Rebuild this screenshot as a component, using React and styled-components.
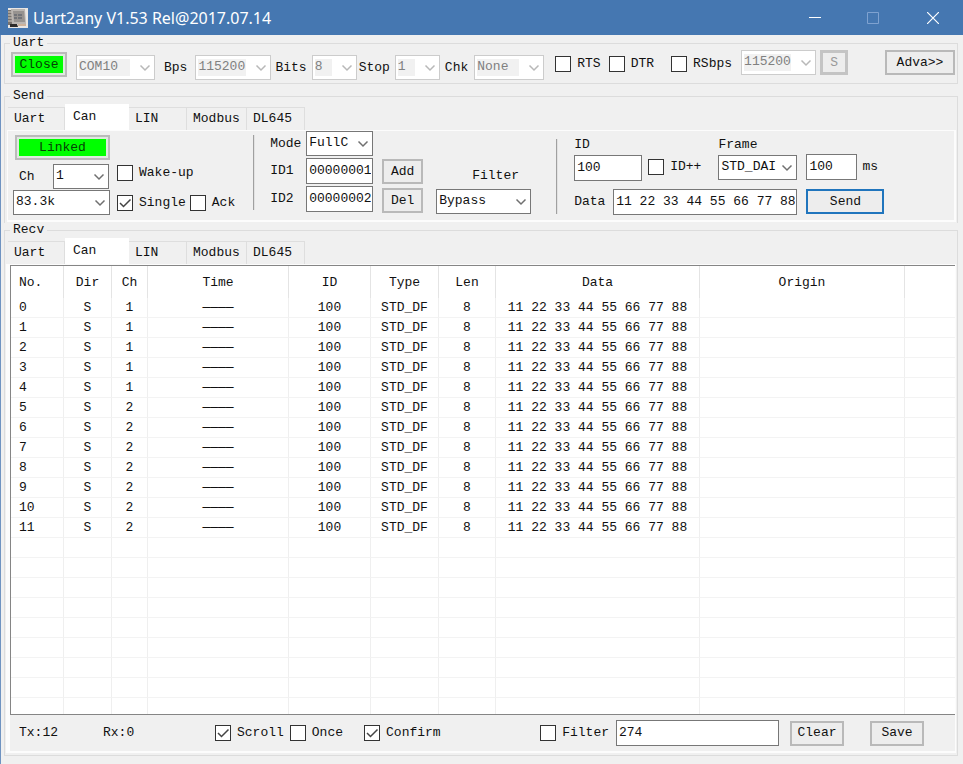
import * as React from "react"
import styled, { createGlobalStyle, css } from "styled-components"

const GlobalStyle = createGlobalStyle`
  *, *::before, *::after {
    box-sizing: border-box;
  }
  body {
    margin: 0;
    background: #f0f0f0;
  }
  body, button, input, select {
    font-family: "Liberation Mono", "DejaVu Sans Mono", monospace;
    font-size: 13px;
    line-height: 14px;
    color: #111;
  }
`

const Window = styled.div`
  display: flex;
  flex-direction: column;
  min-height: 100vh;
  border-left: 1px solid #6f93c1;
`

const TitleBar = styled.header`
  display: flex;
  align-items: center;
  height: 35px;
  margin-left: -1px;
  padding-left: 8px;
  background: #4577b1;
  color: #fff;
`

const Title = styled.h1`
  flex: 1;
  margin: 0 0 0 5px;
  font: 400 16px/20px "Noto Sans", "Open Sans", sans-serif;
`

const WindowButton = styled.button`
  display: flex;
  align-items: center;
  justify-content: center;
  width: ${({ width }) => width || 58}px;
  height: 35px;
  padding: 0;
  border: 0;
  background: transparent;
`

const Body = styled.main`
  display: flex;
  flex: 1;
  flex-direction: column;
  padding: 1px 5px 8px 3px;
`

const Group = styled.fieldset`
  min-width: 0;
  margin: 0 0 ${({ gap }) => gap || 0}px;
  padding: 0;
  border: 1px solid #dcdcdc;
  border-bottom-width: ${({ open }) => (open ? 0 : 1)}px;
`

const Legend = styled.legend`
  height: 14px;
  margin-left: 5px;
  padding: 0 3px;
`

const Row = styled.div`
  display: flex;
  align-items: ${({ align }) => align || "center"};
  gap: ${({ gap }) => gap || 0}px;
  margin-top: ${({ top }) => top || 0}px;
  margin-left: ${({ left }) => left || 0}px;
`

const Column = styled.div`
  display: flex;
  flex-direction: column;
  gap: ${({ gap }) => gap || 0}px;
  margin-top: ${({ top }) => top || 0}px;
  margin-left: ${({ left }) => left || 0}px;
`

const PortBar = styled.div`
  display: flex;
  align-items: flex-start;
  height: 33px;
  padding: 0 2px 0 6px;
`

const Caption = styled.label`
  display: block;
  flex: none;
  width: ${({ width }) => (width ? `${width}px` : "auto")};
  white-space: pre;
`

const Button = styled.button`
  flex: none;
  width: ${({ width }) => width}px;
  height: 25px;
  padding: 0;
  border: 2px solid #b9b9b9;
  background: #ededed;
  text-align: center;
  ${({ primary }) =>
    primary &&
    css`
      border-color: #2075bd;
    `}
  ${({ active }) =>
    active &&
    css`
      border-color: #bbb;
      background: #00ff00;
      box-shadow: inset 0 0 0 2px #dfeadf;
      color: #064006;
    `}
  &:disabled {
    border-width: 3px;
    border-color: #c4c4c4;
    color: #999;
  }
`

const TextInput = styled.input`
  flex: none;
  width: ${({ $width }) => $width}px;
  height: 26px;
  padding: 0 1px 2px 2px;
  border: 1px solid #777;
  border-radius: 0;
  background: #fff;
`

const SelectBox = styled.span`
  display: grid;
  flex: none;
  width: ${({ width }) => width}px;
  height: 25px;
  align-items: center;
  > * {
    grid-area: 1 / 1;
  }
  svg {
    justify-self: end;
    margin-right: 4px;
    pointer-events: none;
  }
`

const StyledSelect = styled.select`
  width: 100%;
  height: 25px;
  padding: 0 0 2px 2px;
  appearance: none;
  border: 1px solid #777;
  border-radius: 0;
  background: #fff;
  &:disabled {
    border-color: #ccc;
    background: linear-gradient(#f1f1f1, #f1f1f1) no-repeat 2px 3px /
      calc(100% - 26px) 17px #fff;
    color: #808080;
    opacity: 1;
  }
`

const CheckLabel = styled.label`
  display: grid;
  flex: none;
  grid-template-columns: 16px auto;
  column-gap: 6px;
  align-items: center;
  white-space: pre;
  svg {
    grid-area: 1 / 1;
    visibility: hidden;
    pointer-events: none;
  }
  input:checked + svg {
    visibility: visible;
  }
`

const Box = styled.input`
  grid-area: 1 / 1;
  width: 16px;
  height: 16px;
  margin: 0;
  appearance: none;
  border: 1px solid #333;
  background: #fff;
`

const TabList = styled.div`
  display: flex;
  align-items: flex-end;
  height: 26px;
  margin-top: 1px;
  padding-left: 3px;
`

const Tab = styled.button`
  width: ${({ width }) => width}px;
  height: 23px;
  padding: 0 0 0 6px;
  border: 1px solid #dedede;
  border-width: 1px 1px 0 0;
  background: #f0f0f0;
  text-align: left;
  &[aria-selected="true"] {
    height: 26px;
    padding: 0 0 2px 8px;
    border-color: #fff;
    background: #fff;
  }
`

const SendPanel = styled.div`
  display: flex;
  align-items: flex-start;
  height: 92px;
  margin: 0 1px 1px 2px;
  border: solid #fcfcfc;
  border-width: 1px 2px 2px 1px;
`

const Divider = styled.div`
  flex: none;
  width: 2px;
  height: 75px;
  margin: ${({ top }) => top}px 0 0 ${({ left }) => left}px;
  border-left: 1px solid #a0a0a0;
  border-right: 1px solid #e2e2e2;
`

const RecvPanel = styled.div`
  margin: 0 1px 2px;
  border: solid #fcfcfc;
  border-width: 1px 1px 2px 4px;
`

const TableFrame = styled.div`
  overflow: hidden;
  border: 1px solid #858585;
  border-right: 0;
  background: #fff;
`

const Table = styled.table`
  width: 100%;
  table-layout: fixed;
  border-collapse: separate;
  border-spacing: 0;
  th,
  td {
    padding: 0;
    border-right: 1px solid #efefef;
    text-align: center;
    white-space: pre;
  }
  th {
    height: 32px;
    padding-top: 2px;
    border-color: #e4e4e4;
    font-weight: 400;
  }
  td {
    height: 20px;
    border-bottom: 1px solid #f3f3f3;
  }
  tbody tr:last-child td {
    height: 16px;
    border-bottom: 0;
  }
  th:first-child,
  td:first-child {
    padding-left: 8px;
    text-align: left;
  }
  th:last-child,
  td:last-child {
    border-right: 0;
  }
`

const Footer = styled.footer`
  display: flex;
  align-items: center;
  height: 36px;
  padding-left: 9px;
`

const Push = styled.div`
  display: flex;
  align-items: center;
  margin-left: auto;
  padding-right: ${({ right }) => right || 0}px;
`

const AppIcon = () => (
  <svg width="20" height="20" viewBox="0 0 20 20" aria-hidden="true">
    <rect width="20" height="20" fill="#e9e6e3" />
    <path d="M0 2h4v15H0z" fill="#77726f" />
    <path d="M0 4h4M0 7h4M0 10h4M0 13h4" stroke="#d5cdc5" />
    <path d="M3 1h14l1 15H4z" fill="#bab5b1" />
    <path d="M5 3h11l1 11H6z" fill="#96928f" />
    <path d="M6 7h3m1 0h4M6 10h3m1 0h4" stroke="#4c5563" />
    <path d="M2 16h7l1 3H2z" fill="#2d2b2b" />
    <path d="M10 17h8" stroke="#cdb29b" strokeWidth="2" />
  </svg>
)

const Chevron = ({ color }) => (
  <svg width="12" height="8" viewBox="0 0 12 8" fill="none">
    <path d="M1.5 1.5 6 6l4.500-4.500" stroke={color} strokeWidth="1.500" />
  </svg>
)

const Select = ({ label, value, width, ...props }) => (
  <SelectBox width={width}>
    <StyledSelect aria-label={label} {...props}>
      <option>{value}</option>
    </StyledSelect>
    <Chevron color={props.disabled ? "#b8b8b8" : "#707070"} />
  </SelectBox>
)

const Check = ({ children, checked }) => (
  <CheckLabel>
    <Box type="checkbox" defaultChecked={checked} />
    <svg width="16" height="16" viewBox="0 0 16 16" fill="none">
      <path d="M3 8l3.500 3.500L13.500 4.500" stroke="#444" strokeWidth="1.500" />
    </svg>
    <span>{children}</span>
  </CheckLabel>
)

const tabs = [
  { name: "Uart", width: 57 },
  { name: "Can", width: 64 },
  { name: "LIN", width: 58 },
  { name: "Modbus", width: 60 },
  { name: "DL645", width: 58 }
]

const Tabs = ({ label }) => {
  const [selected, setSelected] = React.useState("Can")
  return (
    <TabList role="tablist" aria-label={label}>
      {tabs.map(tab => (
        <Tab
          key={tab.name}
          role="tab"
          width={tab.width}
          aria-selected={selected === tab.name}
          onClick={() => setSelected(tab.name)}
        >
          {tab.name}
        </Tab>
      ))}
    </TabList>
  )
}

const columns = [
  { name: "No.", width: 53 },
  { name: "Dir", width: 48 },
  { name: "Ch", width: 36 },
  { name: "Time", width: 141 },
  { name: "ID", width: 82 },
  { name: "Type", width: 68 },
  { name: "Len", width: 57 },
  { name: "Data", width: 204 },
  { name: "Origin", width: 205 },
  { name: "" }
]

const frames = Array.from({ length: 12 }, (_, no) => ({
  no,
  ch: no < 5 ? 1 : 2
}))

const emptyRows = Array.from({ length: 9 }, (_, i) => i)

const FrameTable = () => (
  <Table>
    <colgroup>
      {columns.map(({ name, width }) => (
        <col key={name} width={width} />
      ))}
    </colgroup>
    <thead>
      <tr>
        {columns.map(({ name }) => (
          <th key={name}>{name}</th>
        ))}
      </tr>
    </thead>
    <tbody>
      {frames.map(({ no, ch }) => (
        <tr key={no}>
          <td>{no}</td>
          <td>S</td>
          <td>{ch}</td>
          <td>————</td>
          <td>100</td>
          <td>STD_DF</td>
          <td>8</td>
          <td>11 22 33 44 55 66 77 88</td>
          <td />
          <td />
        </tr>
      ))}
      {emptyRows.map(i => (
        <tr key={`empty${i}`}>
          {columns.map(({ name }) => (
            <td key={name} />
          ))}
        </tr>
      ))}
    </tbody>
  </Table>
)

const App = () => (
  <Window>
    <GlobalStyle />
    <TitleBar>
      <AppIcon />
      <Title>Uart2any V1.53 Rel@2017.07.14</Title>
      <WindowButton aria-label="Minimize">
        <svg width="12" height="12" stroke="#fff">
          <path d="M0 5.500h12" />
        </svg>
      </WindowButton>
      <WindowButton aria-label="Maximize" disabled>
        <svg width="12" height="12" fill="none" stroke="#7fa2d0">
          <path d="M.5 .5h11v11H.5z" />
        </svg>
      </WindowButton>
      <WindowButton aria-label="Close window" width={61}>
        <svg width="12" height="12" stroke="#fff" strokeWidth="1.200">
          <path d="M0 0l12 12M12 0L0 12" />
        </svg>
      </WindowButton>
    </TitleBar>
    <Body>
      <Group gap={5}>
        <Legend>Uart</Legend>
        <PortBar>
          <Row top={2}>
            <Button active width={56}>
              Close
            </Button>
          </Row>
          <Row top={5} left={9}>
            <Select label="Port" value="COM10" width={79} disabled />
            <Row left={9} gap={8}>
              <Caption>Bps</Caption>
              <Select label="Bps" value="115200" width={76} disabled />
            </Row>
            <Row left={4} gap={5}>
              <Caption>Bits</Caption>
              <Select label="Bits" value="8" width={45} disabled />
            </Row>
            <Row left={2} gap={5}>
              <Caption>Stop</Caption>
              <Select label="Stop" value="1" width={45} disabled />
            </Row>
            <Row left={5} gap={6}>
              <Caption>Chk</Caption>
              <Select label="Chk" value="None" width={70} disabled />
            </Row>
          </Row>
          <Row top={6} left={11} gap={8}>
            <Check>RTS</Check>
            <Check>DTR</Check>
            <Row left={9}>
              <Check>RSbps</Check>
            </Row>
          </Row>
          <Row left={9} gap={4}>
            <Select label="RSbps rate" value="115200" width={75} disabled />
            <Button width={28} disabled>
              S
            </Button>
          </Row>
          <Push>
            <Button width={70}>Adva&gt;&gt;</Button>
          </Push>
        </PortBar>
      </Group>

      <Group open>
        <Legend>Send</Legend>
        <Tabs label="Send protocol" />
        <SendPanel>
          <Column top={4} left={5}>
            <Row left={2}>
              <Button active width={95}>
                Linked
              </Button>
            </Row>
            <Row top={4} gap={8} align="flex-start">
              <Row left={6}>
                <Caption width={34}>Ch</Caption>
                <Select label="Ch" value="1" width={56} />
              </Row>
              <Row top={1}>
                <Check>Wake-up</Check>
              </Row>
            </Row>
            <Row top={1} gap={7}>
              <Select label="Bit rate" value="83.3k" width={97} />
              <Row gap={4}>
                <Check checked>Single</Check>
                <Check>Ack</Check>
              </Row>
            </Row>
          </Column>
          <Divider top={4} left={18} />
          <Column left={15} gap={2}>
            <Row>
              <Caption width={36}>Mode</Caption>
              <Select label="Mode" value="FullC" width={67} />
            </Row>
            <Row>
              <Caption width={36} htmlFor="id1">
                ID1
              </Caption>
              <TextInput id="id1" $width={67} defaultValue="00000001" />
            </Row>
            <Row>
              <Caption width={36} htmlFor="id2">
                ID2
              </Caption>
              <TextInput id="id2" $width={67} defaultValue="00000002" />
            </Row>
          </Column>
          <Column left={9} top={28} gap={4}>
            <Button width={41}>Add</Button>
            <Button width={41}>Del</Button>
          </Column>
          <Column left={13} top={38} gap={6}>
            <Row left={36}>
              <Caption>Filter</Caption>
            </Row>
            <Select label="Filter" value="Bypass" width={95} />
          </Column>
          <Divider top={8} left={25} />
          <Column left={16} top={7} gap={8}>
            <Row align="flex-start">
              <Column gap={3}>
                <Caption htmlFor="frame-id">ID</Caption>
                <TextInput id="frame-id" $width={68} defaultValue="100" />
              </Column>
              <Row left={6} top={21}>
                <Check>ID++</Check>
              </Row>
              <Column left={17} gap={3}>
                <Caption>Frame</Caption>
                <Select label="Frame" value="STD_DAI" width={79} />
              </Column>
            </Row>
            <Row>
              <Caption width={39} htmlFor="data">
                Data
              </Caption>
              <TextInput
                id="data"
                $width={184}
                defaultValue="11 22 33 44 55 66 77 88"
              />
            </Row>
          </Column>
          <Column left={9} top={23} gap={9}>
            <Row gap={5}>
              <TextInput id="period" $width={51} defaultValue="100" />
              <Caption htmlFor="period">ms</Caption>
            </Row>
            <Button primary width={78}>
              Send
            </Button>
          </Column>
        </SendPanel>
      </Group>

      <Group>
        <Legend>Recv</Legend>
        <Tabs label="Receive protocol" />
        <RecvPanel>
          <TableFrame>
            <FrameTable />
          </TableFrame>
          <Footer>
            <Caption as="span" width={84}>
              Tx:12
            </Caption>
            <Caption as="span" width={112}>
              Rx:0
            </Caption>
            <Row gap={6}>
              <Check checked>Scroll</Check>
              <Check>Once</Check>
              <Row left={15}>
                <Check checked>Confirm</Check>
              </Row>
            </Row>
            <Push right={31}>
              <Row gap={7}>
                <Check>Filter</Check>
                <TextInput
                  aria-label="Filter value"
                  $width={163}
                  defaultValue="274"
                />
              </Row>
              <Row left={11} gap={26}>
                <Button width={54}>Clear</Button>
                <Button width={54}>Save</Button>
              </Row>
            </Push>
          </Footer>
        </RecvPanel>
      </Group>
    </Body>
  </Window>
)

export default App
